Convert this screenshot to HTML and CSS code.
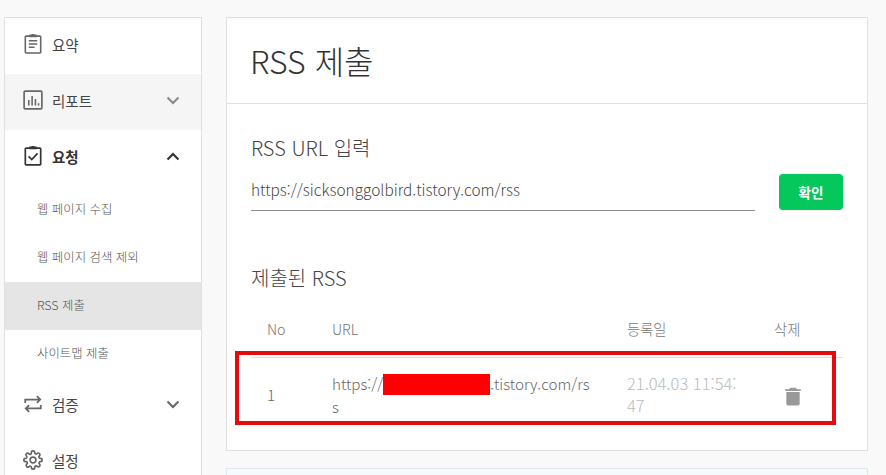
FILE: index.html
```html
<!DOCTYPE html>
<html lang="ko">
<head>
<meta charset="utf-8">
<title>RSS 제출</title>
<link rel="stylesheet" href="styles.css">
</head>
<body>
<div class="page">
  <nav class="side">
    <a class="item"><svg class="ico" viewBox="1 1 16 19"><path d="M2.500 3h13a.8.8 0 0 1 .8.8v14.400a.8.8 0 0 1-.8.8h-13a.8.8 0 0 1-.8-.8V3.800a.8.8 0 0 1 .8-.8z" fill="none" stroke="#666" stroke-width="1.500"/><path d="M6 3.500V2h2a1 1 0 0 1 2 0h2v1.500z" fill="#666" stroke="#666"/><path d="M5 7.500h8M5 10.500h8M5 13.500h5.500" stroke="#666" stroke-width="1.400" fill="none"/></svg><span>요약</span></a>
    <a class="item hover"><svg class="ico" viewBox="0 0 18 18"><rect x="1" y="1" width="16" height="16" rx="1" fill="none" stroke="#666" stroke-width="1.500"/><path d="M5.200 14V9M8.200 14V5.500M11.200 14V8M14 14v-2" stroke="#666" stroke-width="1.400" fill="none"/></svg><span>리포트</span><svg class="chev" viewBox="0 0 14 9"><path d="M1.500 1.500 7 7l5.500-5.500" fill="none" stroke="#888" stroke-width="2"/></svg></a>
    <a class="item open"><svg class="ico" viewBox="1 1 16 19"><path d="M2.500 3h13a.8.8 0 0 1 .8.8v14.400a.8.8 0 0 1-.8.8h-13a.8.8 0 0 1-.8-.8V3.800a.8.8 0 0 1 .8-.8z" fill="none" stroke="#333" stroke-width="1.600"/><path d="M6 3.500V2h2a1 1 0 0 1 2 0h2v1.500z" fill="#333" stroke="#333"/><path d="m4.800 10.800 3 3 5.500-5.800" stroke="#333" stroke-width="1.600" fill="none"/></svg><span>요청</span><svg class="chev" viewBox="0 0 14 9"><path d="M1.500 7.500 7 2l5.500 5.500" fill="none" stroke="#333" stroke-width="2.200"/></svg></a>
    <a class="sub">웹 페이지 수집</a>
    <a class="sub">웹 페이지 검색 제외</a>
    <a class="sub active">RSS 제출</a>
    <a class="sub">사이트맵 제출</a>
    <a class="item"><svg class="ico" viewBox="0 0 18 18"><path d="M2 8V5h12.500M12.500 2l3 3-3 3M16 10v3H3.500M5.500 10l-3 3 3 3" fill="none" stroke="#666" stroke-width="1.600"/></svg><span>검증</span><svg class="chev" viewBox="0 0 14 9"><path d="M1.500 1.500 7 7l5.500-5.500" fill="none" stroke="#666" stroke-width="2"/></svg></a>
    <a class="item"><svg class="ico" viewBox="0 0 24 24"><path d="M12 15.500a3.500 3.500 0 1 0 0-7 3.500 3.500 0 0 0 0 7z" fill="none" stroke="#666" stroke-width="2"/><path d="M19.400 15a1.650 1.650 0 0 0 .33 1.820l.06.06a2 2 0 1 1-2.830 2.830l-.06-.06a1.650 1.650 0 0 0-2.800 1.170V21a2 2 0 0 1-4 0v-.09A1.650 1.650 0 0 0 7.300 19.800l-.06.06a2 2 0 1 1-2.830-2.830l.06-.06A1.650 1.650 0 0 0 3.300 14H3a2 2 0 0 1 0-4h.09A1.650 1.650 0 0 0 4.200 7.300l-.06-.06a2 2 0 1 1 2.830-2.830l.06.06A1.650 1.650 0 0 0 10 3.300V3a2 2 0 0 1 4 0v.09a1.650 1.650 0 0 0 2.800 1.170l.06-.06a2 2 0 1 1 2.830 2.830l-.06.06A1.650 1.650 0 0 0 20.700 10H21a2 2 0 0 1 0 4h-.09a1.650 1.650 0 0 0-1.510 1z" fill="none" stroke="#666" stroke-width="2"/></svg><span>설정</span></a>
  </nav>
  <main class="content">
    <section class="card">
      <h1 class="title">RSS 제출</h1>
      <div class="body">
        <h2 class="label">RSS URL 입력</h2>
        <div class="form">
          <div class="input">https://sicksonggolbird.tistory.com/rss</div>
          <button class="btn">확인</button>
        </div>
        <h2 class="label listhead">제출된 RSS</h2>
        <table class="tbl">
          <thead><tr><th class="c-no">No</th><th class="c-url">URL</th><th class="c-date">등록일</th><th class="c-del">삭제</th></tr></thead>
          <tbody><tr>
            <td class="c-no">1</td>
            <td class="c-url">https://<span class="mask"></span>.tistory.com/rs<wbr>s</td>
            <td class="c-date muted">21.04.03 11:54:47</td>
            <td class="c-del"><svg class="trash" viewBox="0 0 14 18"><path d="M0 3h14v1.500H0zM4.500 1.500h5L10.500 3h-7zM1 5.500h12V16a1.500 1.500 0 0 1-1.500 1.500h-9A1.500 1.500 0 0 1 1 16z" fill="#999"/></svg></td>
          </tr></tbody>
        </table>
        <div class="mark"></div>
      </div>
    </section>
    <section class="notice"></section>
  </main>
</div>
</body>
</html>
```
FILE: styles.css
```css
* { box-sizing: border-box; }
html, body { margin: 0; height: 100%; overflow: hidden; }
body { background: #f9f9f9; font-family: "Noto Sans CJK KR", "Noto Sans", sans-serif; color: #333; }
.page { display: flex; align-items: flex-start; gap: 24px; padding: 17px 18px 0 4px; }
.side { width: 198px; height: 470px; overflow: hidden; flex: none; background: #fff; border: 1px solid #e0e0e0; }
.item { display: flex; align-items: center; height: 56px; padding: 0 21px 4px 18px; font-size: 14.500px; color: #444; }
.item span { margin-left: 9px; flex: 1; }
.hover { background: #f5f5f5; }
.open { font-weight: 700; color: #333; }
.ico { width: 20px; height: 20px; flex: none; }
.chev { width: 14px; height: 9px; flex: none; }
.sub { display: flex; align-items: center; height: 48px; padding: 0 0 3px 32px; font-size: 12.400px; font-weight: 300; color: #555; }
.active { background: #e5e5e5; }
.content { width: 642px; flex: none; }
.card { background: #fff; border: 1px solid #e0e0e0; height: 434px; }
.title { margin: 0; height: 86px; border-bottom: 1px solid #e0e0e0; padding: 0 23px; font-size: 32px; line-height: 84px; font-weight: 300; color: #333; }
.body { position: relative; padding: 30px 24px 0; }
.label { margin: 0; font-size: 20px; line-height: 28px; font-weight: 300; color: #444; }
.form { display: flex; align-items: flex-end; gap: 24px; margin-top: 12px; }
.input { flex: 1; height: 36px; line-height: 29px; font-size: 15.400px; color: #444; border-bottom: 1px solid #8c8c8c; font-weight: 300; }
.btn { width: 64px; height: 36px; margin-bottom: 1px; border: 0; border-radius: 4px; background: #04c85c; color: #fff; font: 700 13.500px "Noto Sans CJK KR", sans-serif; padding: 0; }
.listhead { margin-top: 53px; }
.tbl { width: 592px; margin-top: 15px; border-collapse: collapse; table-layout: fixed; font-size: 15.200px; font-weight: 300; }
.tbl th { height: 50px; padding: 0 0 6px; font-size: 14.300px; font-weight: 300; color: #777; text-align: left; border-bottom: 1px solid #e0e0e0; }
.tbl td { height: 74px; padding: 0; color: #666; vertical-align: middle; line-height: 22px; }
.c-no { width: 81px; padding-left: 16px !important; }
.c-url { width: 295px; padding-right: 33px !important; word-break: break-all; }
.c-date { width: 147px; padding-right: 32px !important; }
.c-del { width: 69px; }
.tbl td.muted { color: #bbb; font-size: 16.500px; word-break: break-all; }
.tbl td.c-del { padding: 4px 0 0 11px; }
.mask { display: inline-block; width: 107px; height: 21px; background: #f00; vertical-align: -5px; }
.trash { display: block; width: 16px; height: 20px; }
.mark { position: absolute; left: 8px; top: 247px; width: 601px; height: 74px; border: 4px solid #e30b0b; }
.notice { height: 60px; margin-top: 17px; background: #f5fafd; border: 1px solid #e0e6ea; }
```
